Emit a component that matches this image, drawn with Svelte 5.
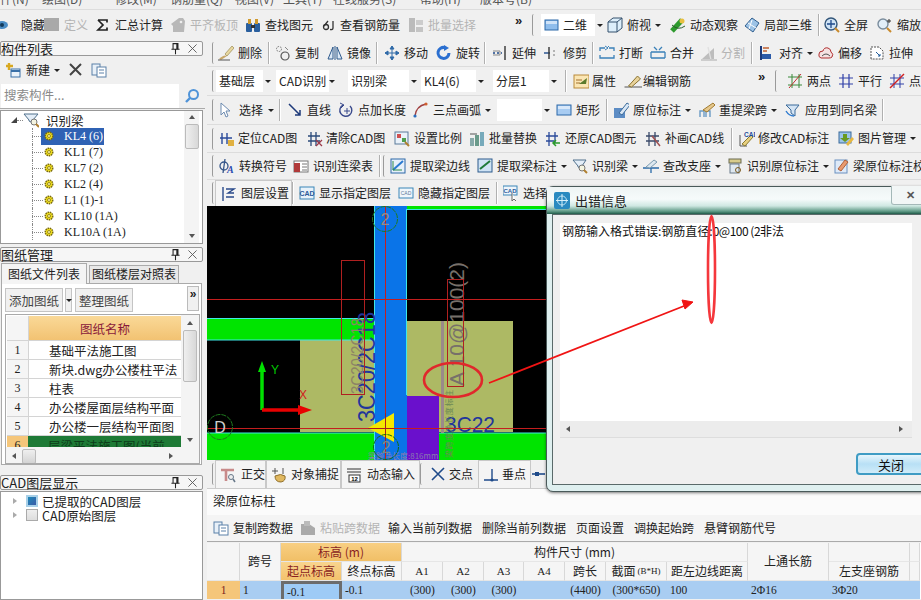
<script>
  const I = {
    eye:'<ellipse cx="2" cy="8" rx="6" ry="4" fill="#4a8cc4"/><circle cx="2" cy="8" r="2" fill="#123a5a"/>',
    sq:'<rect x="0" y="1" width="15" height="13" fill="#a9a9a9"/>',
    sigma:'<path d="M3 3H12V5.5M3 3L8 8L3 13H12V10.5" fill="none" stroke="#222" stroke-width="1.7"/>',
    tag:'<path d="M1 7L9 1H13L15 4L14 15H3V9Z" fill="#b8b8b8"/><circle cx="11" cy="5" r="1.3" fill="#eee"/>',
    binoc:'<rect x="1" y="6" width="6" height="9" rx="1" fill="#2a5f9e"/><rect x="9" y="6" width="6" height="9" rx="1" fill="#2a5f9e"/><rect x="3" y="2" width="3" height="5" fill="#d09a2e"/><rect x="10" y="2" width="3" height="5" fill="#d09a2e"/><rect x="6" y="8" width="4" height="3" fill="#333"/>',
    glass:'<circle cx="4" cy="10" r="2.5" fill="none" stroke="#333" stroke-width="1.3"/><path d="M2 9L6 4M11 4V11Q11 13 8 12.5" fill="none" stroke="#333" stroke-width="1.3"/>',
    batch:'<rect x="1" y="1" width="6" height="14" fill="#bbb"/><rect x="8" y="3" width="7" height="5" fill="#ccc"/><rect x="8" y="10" width="7" height="5" fill="#c4c4c4"/>',
    flat:'<rect x="1" y="3" width="13" height="10" fill="#8fbdec" stroke="#2c68a8"/><rect x="2" y="4" width="11" height="3" fill="#cfe3f8"/>',
    cube:'<path d="M1 5L6 1H15V11L10 15H1Z" fill="#dceefa" stroke="#34506c"/><path d="M1 5H10V15M10 5L15 1" fill="none" stroke="#34506c"/>',
    orbit:'<path d="M2 14L12 3" stroke="#2e9a2e" stroke-width="5"/><circle cx="12" cy="4" r="2.5" fill="#e8c040"/><path d="M2 8Q8 14 15 9" fill="none" stroke="#2c5c2c"/>',
    cube3:'<path d="M8 1L15 6L9 15L1 9Z" fill="#9cc3e6" stroke="#315f8f"/><path d="M4 6L12 11M8 3L5 12" stroke="#fff"/>',
    full:'<circle cx="7" cy="7" r="6" fill="#cfe3f5" stroke="#33567a" stroke-width="1.4"/><path d="M7 3V11M3 7H11" stroke="#1e4a8a" stroke-width="1.3"/><path d="M11 11L15 15" stroke="#c98a2c" stroke-width="2"/>',
    zoom:'<circle cx="6" cy="7" r="5" fill="#e2eef8" stroke="#7a8c9c" stroke-width="1.4"/><path d="M10 11L14 15" stroke="#c98a2c" stroke-width="2"/><path d="M12 2V6M10 4H14" stroke="#333"/>',
    brush:'<path d="M1 14Q6 9 9 11L3 15Z" fill="#c8a86a"/><path d="M7 9L14 1L16 3L9 11Z" fill="#e8d8a0" stroke="#8c7a40" stroke-width=".6"/><path d="M0 15H12" stroke="#555"/>',
    copy:'<circle cx="4" cy="4" r="2.5" fill="none" stroke="#777" stroke-dasharray="1.5 1"/><circle cx="10" cy="11" r="4" fill="none" stroke="#555" stroke-width="1.2"/><path d="M10 2L13 5" stroke="#888"/>',
    mirror:'<path d="M1 14L6 2V14Z" fill="#dbe8f5" stroke="#2f5a8c"/><path d="M15 14L10 2V14Z" fill="#dbe8f5" stroke="#2f5a8c"/><path d="M8 1V15" stroke="#2f5a8c"/>',
    move:'<path d="M8 1V15M1 8H15M8 1L6 4H10ZM8 15L6 12H10ZM1 8L4 6V10ZM15 8L12 6V10Z" fill="#2f6aa8" stroke="#2f6aa8"/>',
    rot:'<path d="M13 8A5.5 5.5 0 1 1 9 2.6" fill="none" stroke="#2b6fd0" stroke-width="3"/><path d="M8 0L13 3L8 6Z" fill="#2b6fd0"/>',
    ext:'<path d="M1 8H3M5 8H7M9 8H10" stroke="#1e4a8a" stroke-width="1.4"/><path d="M1 6H8V10H1" fill="none" stroke="#888"/><path d="M13 1V15" stroke="#333" stroke-width="1.4"/>',
    trim:'<path d="M1 8H7" stroke="#1e4a8a" stroke-width="1.4"/><path d="M6 2V14" stroke="#333" stroke-width="1.4"/><path d="M10 6H12M10 10H12" stroke="#777"/>',
    brk:'<path d="M1 6V3H6M15 6V3H10M1 10V13H15V10" fill="none" stroke="#3a80b8" stroke-width="1.3"/><path d="M6 1L9 3L6 5M10 1L8 3" fill="none" stroke="#3a80b8"/>',
    merge:'<path d="M1 7H15M1 13H15M4 2L7 5M12 2L9 5M1 7V13M15 7V13" fill="none" stroke="#3a80b8" stroke-width="1.3"/>',
    split:'<path d="M1 14L13 3V14Z" fill="#bdbdbd"/><path d="M7 2L10 15" stroke="#e0e0e0" stroke-width="1.3"/><path d="M0 15H16" stroke="#aaa"/>',
    align:'<path d="M2 1V15" stroke="#1c3a7a" stroke-width="2"/><rect x="3" y="9" width="9" height="5" fill="#2a5aa8"/><path d="M4 3H10M4 6H8" stroke="#c06030" stroke-width="1.6"/>',
    cloud:'<path d="M3 13Q0 12 1 9Q1 6 5 6Q6 2 10 3Q13 4 13 7Q16 9 14 12Q13 13 11 13Z" fill="#f5e2e2" stroke="#b03030"/><path d="M4 11Q8 7 12 11" fill="none" stroke="#555"/>',
    stretch:'<path d="M2 14V2H10L14 6V14Z" fill="#fff" stroke="#555" stroke-dasharray="2 1"/><path d="M7 7L11 11M9 11H11V9" stroke="#1e5a9a" fill="none"/>',
    prop:'<rect x="1" y="2" width="15" height="13" fill="#fbe6b4" stroke="#b98a3a"/><path d="M3 7H9M3 10H7" stroke="#a37030"/><path d="M6 11L14 5L13 11Z" fill="#5c7a2c"/>',
    edit:'<path d="M0 14H18" stroke="#555"/><path d="M4 13L13 3L16 6L7 14Z" fill="#e8d29a" stroke="#8a7330"/>',
    two:'<path d="M1 4H15M1 12H15M5 1V15M12 1V15" stroke="#3a8a3a"/><path d="M2 15L14 1" stroke="#c03030"/>',
    par:'<path d="M1 5H15M1 11H15M5 1V15M11 1V15" stroke="#3040a8" stroke-width="1.2"/>',
    point:'<path d="M1 5H15M1 11H15M5 1V15M11 1V15" stroke="#3040a8"/><path d="M1 15L15 1" stroke="#d02020" stroke-width="1.4"/>',
    cursor:'<path d="M3 1V13L6 10L8 15L10 14L8 9H12Z" fill="#fff" stroke="#6d8bb0"/>',
    line:'<path d="M2 2L13 13M13 8V13H8" fill="none" stroke="#1e3a7a" stroke-width="1.5"/>',
    arcplus:'<path d="M5 3A6 6 0 1 0 12 4" fill="none" stroke="#3a4a8c" stroke-width="1.4"/><path d="M2 1L6 3L3 6M9 6V12M6 9H12" fill="none" stroke="#3a4a8c"/>',
    arc:'<path d="M2 14Q3 4 13 2" fill="none" stroke="#a04040" stroke-width="1.5"/><circle cx="2" cy="14" r="1.6" fill="#2a6fc0"/><circle cx="13" cy="2" r="1.6" fill="#d06030"/>',
    rect:'<rect x="1" y="3" width="14" height="10" fill="#a8ccf2" stroke="#2c68a8"/><rect x="2" y="4" width="12" height="3" fill="#d8e8fa"/>',
    mark:'<rect x="1" y="6" width="11" height="10" fill="#5c8cc4"/><path d="M6 11L14 1L17 3L9 13Z" fill="#d8e6f4" stroke="#3a6a9a"/>',
    span:'<path d="M1 15V9H5V15M7 15V9H11V15" fill="none" stroke="#6a9ac4" stroke-width="1.4"/><path d="M4 8L14 1L16 3L8 10Z" fill="#e6c88c" stroke="#a07a30"/>',
    apply:'<path d="M1 3H14L10 8V14L6 11V8Z" fill="#d4e4f4" stroke="#3a6a9a"/><path d="M1 9Q4 14 9 14" stroke="#2c7ad0" fill="none" stroke-width="1.4"/>',
    loc:'<path d="M3 2V13M8 2V13M1 7H13" stroke="#2a4a9a" stroke-width="1.4"/><rect x="9" y="9" width="6" height="6" fill="#e0b040"/>',
    clear:'<path d="M4 1V15M9 1V15M1 5H13M1 10H13" stroke="#2a4a7a" stroke-width="1.3"/><path d="M9 9L15 15M15 9L9 15" stroke="#9c3a4a" stroke-width="1.3"/>',
    scale:'<rect x="1" y="1" width="13" height="12" fill="#eaf2fa" stroke="#5a7a9a"/><rect x="3" y="3" width="4" height="4" fill="#d05050"/><rect x="8" y="7" width="4" height="4" fill="#50a050"/><path d="M11 11L15 15" stroke="#b08030" stroke-width="2"/>',
    repl:'<rect x="1" y="7" width="4" height="8" fill="#8aa"/><rect x="6" y="4" width="4" height="11" fill="#6a9a8a"/><rect x="11" y="1" width="4" height="14" fill="#7ab"/><path d="M1 3H8" stroke="#555"/>',
    restore:'<path d="M4 1V15M10 1V12M1 5H13M1 10H9" stroke="#2a4a9a" stroke-width="1.3"/><path d="M15 12H9M11 9L8 12L11 15" fill="none" stroke="#2a9a2a" stroke-width="1.5"/>',
    draw:'<path d="M4 1V15M10 1V15M1 5H14M1 10H14" stroke="#3a4a6a" stroke-width="1.3"/><path d="M7 5L15 15" stroke="#a05050" stroke-width="1.5"/>',
    modcad:'<path d="M1 4V15H8" fill="none" stroke="#555"/><path d="M3 13L12 4L14 6L6 15Z" fill="#e8d080" stroke="#8a7a30"/><text x="5" y="6" font-size="6.5" font-family="Liberation Sans" font-weight="700" fill="#1e4a9a">CAD</text>',
    pic:'<rect x="1" y="1" width="12" height="11" fill="#9cc4ea" stroke="#3a6a9a"/><path d="M5 3H9V7H12L7 11L2 7H5Z" fill="#6a9a20"/><path d="M8 13L14 6L16 8L10 15Z" fill="#e8b840"/>',
    phi:'<circle cx="5" cy="8" r="4" fill="none" stroke="#35558a" stroke-width="1.3"/><path d="M6 1L4 15" stroke="#35558a" stroke-width="1.3"/><text x="8" y="15" font-size="10" font-style="italic" font-weight="700" font-family="Liberation Serif" fill="#2a4ab0">A</text>',
    tbl:'<rect x="1" y="3" width="14" height="11" fill="#fff" stroke="#777"/><rect x="1" y="5" width="6" height="9" fill="#b03a3a"/><path d="M9 6H14M9 9H14M9 12H14" stroke="#777"/>',
    pick:'<rect x="1" y="1" width="14" height="14" fill="#e6f0fa" stroke="#2c68a8"/><path d="M3 12L13 3" stroke="#2a7ad0" stroke-width="2"/><path d="M3 3V12H12" stroke="#2c8a4a" fill="none"/>',
    pickm:'<rect x="1" y="1" width="14" height="13" fill="#cfe3f5" stroke="#2c5a8c"/><path d="M3 11L13 3" stroke="#1e7a3a" stroke-width="2"/>',
    recog:'<path d="M1 2H14L10 8V11L6 9V8Z" fill="#e4eef8" stroke="#50708c"/><circle cx="10" cy="10" r="3" fill="#f4f4e0" stroke="#777"/><path d="M12 12L15 15" stroke="#b08030" stroke-width="2"/>',
    check:'<path d="M0 10H16M8 10V15" stroke="#2a6aa8" stroke-width="1.3"/><path d="M3 9L11 2L14 4L7 10Z" fill="#dde8f0" stroke="#7a9ab0"/>',
    orig:'<rect x="2" y="1" width="12" height="4" fill="#d8cc8c" stroke="#6a6a50"/><rect x="3" y="6" width="9" height="9" fill="#dfe8f0" stroke="#6a7a8a"/><circle cx="11" cy="12" r="2.5" fill="none" stroke="#7a5a20"/>',
    chk:'<rect x="2" y="2" width="12" height="13" fill="#dfeaf8" stroke="#6a90c0"/><path d="M5 11L12 2L15 4L8 13Z" fill="#e89a70" stroke="#b0603a"/>',
    layer:'<path d="M3 1V15" stroke="#2a4a8a" stroke-width="1.4"/><path d="M6 3H14L8 7H14M6 11H14" fill="none" stroke="#2a4a8a" stroke-width="1.3"/>',
    cad:'<rect x="1" y="2" width="14" height="12" fill="#e8f2fa" stroke="#3a86b8"/><text x="8" y="11" text-anchor="middle" font-size="7" font-family="Liberation Sans" font-weight="700" fill="#2a5a9a">CAD</text>',
    cad2:'<rect x="1" y="3" width="14" height="10" fill="#f0f6fb" stroke="#3a86b8"/><text x="8" y="10" text-anchor="middle" font-size="5" font-family="Liberation Sans" fill="#5a7a9a">CAD</text>',
    cadsel:'<rect x="0" y="1" width="14" height="9" fill="#eef5fb" stroke="#3a86b8"/><text x="7" y="8" text-anchor="middle" font-size="6" font-family="Liberation Sans" font-weight="700" fill="#2a5a9a">CAD</text><path d="M9 8V16L11 14L13 16" fill="#fff" stroke="#666"/>',
    ortho:'<path d="M1 3H14M6 3V14" stroke="#c88a8a" stroke-width="2.6"/><circle cx="11" cy="10" r="2.5" fill="#eee" stroke="#678"/><path d="M13 12L15 15" stroke="#678" stroke-width="1.5"/>',
    snap:'<path d="M4 1V7M1 4H7M12 1V7" stroke="#555"/><path d="M4 9Q10 6 14 9Q15 14 10 15Q4 15 4 9Z" fill="#e0b860" stroke="#90702c"/>',
    dyn:'<path d="M1 2H15M1 5H15" stroke="#333"/><rect x="3" y="8" width="11" height="7" fill="#fff" stroke="#333"/><text x="8.5" y="14" text-anchor="middle" font-size="6" font-family="Liberation Sans" font-weight="700">12</text>',
    cross:'<path d="M2 2L14 14M14 2L2 14" stroke="#1e4a8a" stroke-width="1.6"/>',
    perp:'<path d="M1 13H15M9 2V13" stroke="#1e4a8a" stroke-width="1.4"/><circle cx="9" cy="13" r="1.6" fill="#1e4a8a"/>',
    mid:'<path d="M1 8H14" stroke="#1e4a8a" stroke-width="1.6"/><rect x="4" y="6" width="4" height="4" fill="#1e4a8a"/>',
    pcopy:'<rect x="1" y="2" width="8" height="11" fill="#e8f0f8" stroke="#5a80a8"/><rect x="6" y="5" width="9" height="10" fill="#fff" stroke="#5a80a8"/><path d="M8 8H13M8 11H13" stroke="#5a80a8"/>',
    ppaste:'<path d="M1 4H9L15 8V15H1Z" fill="#aaa"/><rect x="4" y="1" width="6" height="5" fill="#bbb"/>',
    newi:'<path d="M4 1V8M1 4H8" stroke="#d8a820" stroke-width="2.4"/><rect x="6" y="7" width="9" height="8" fill="#eaf2fa" stroke="#3a70a8"/><path d="M6 9H15" stroke="#3a70a8" stroke-width="2"/>',
    del:'<path d="M2 2L13 13M13 2L2 13" stroke="#444" stroke-width="2"/>',
    mag:'<circle cx="9.5" cy="6.5" r="4.5" fill="none" stroke="#4f93d8" stroke-width="2"/><path d="M6 10L2 14" stroke="#4f93d8" stroke-width="2.4"/>',
    pin:'<path d="M5 2H11V9H5ZM3 9H13M8 9V15" fill="none" stroke="#222" stroke-width="1.3"/><path d="M9 2H11V9H9Z" fill="#222"/>',
    x:'<path d="M3 3L13 13M13 3L3 13" stroke="#555" stroke-width="1.1"/>',
    gear:'<circle cx="8" cy="8" r="5" fill="#f3e21b" stroke="#7a6a10" stroke-dasharray="2 1" stroke-width="2"/><circle cx="8" cy="8" r="2" fill="#fff8a0" stroke="#7a6a10"/>',
    rootic:'<path d="M1 2H15L10 8V11L6 9V8Z" fill="#e4eef8" stroke="#50708c"/><circle cx="11" cy="10" r="3" fill="#f4f4e0" stroke="#777"/><path d="M13 12L16 15" stroke="#b08030" stroke-width="2"/>'
  };

  // Toolbars are described by the x where each item starts; widths derive from those.
  const build = (items, start, end) => items.map((it, k) => ({
    ...it,
    w: (k + 1 < items.length ? items[k + 1].x : end) - it.x,
    pad: k === 0 ? it.x - start : 0
  }));

  const top = build([
    {x:0,i:'eye',t:'隐藏',g:5},{x:44,i:'sq',t:'定义',off:1},{x:95,i:'sigma',t:'汇总计算'},{x:170,i:'tag',t:'平齐板顶',off:1},
    {x:245,i:'binoc',t:'查找图元'},{x:322,i:'glass',t:'查看钢筋量',g:2},{x:408,i:'batch',t:'批量选择',off:1},{x:515,m:1},{x:532,grip:1},
    {x:541,combo:1,i:'flat',t:'二维',cw:63},{x:607,i:'cube',t:'俯视',caret:1},{x:670,i:'orbit',t:'动态观察'},{x:744,i:'cube3',t:'局部三维'},{x:818,sep:1},
    {x:824,i:'full',t:'全屏'},{x:877,i:'zoom',t:'缩放'}
  ], 0, 921);

  const rows = [
    {cls:'ra', items:build([
      {x:212,grip:1},{x:218,i:'brush',t:'删除'},{x:268,sep:1},{x:275,i:'copy',t:'复制'},{x:327,i:'mirror',t:'镜像'},{x:376,sep:1},{x:384,i:'move',t:'移动'},
      {x:436,i:'rot',t:'旋转'},{x:484,sep:1},{x:492,i:'ext',t:'延伸'},{x:543,i:'trim',t:'修剪'},{x:592,sep:1},{x:599,i:'brk',t:'打断'},{x:650,i:'merge',t:'合并'},
      {x:701,i:'split',t:'分割',off:1},{x:751,sep:1},{x:759,i:'align',t:'对齐',caret:1},{x:818,i:'cloud',t:'偏移'},{x:869,i:'stretch',t:'拉伸'}
    ],207,921)},
    {cls:'rb', items:build([
      {x:212,grip:1},{x:216,sel:1,t:'基础层',cw:56},{x:276,sel:1,t:'CAD识别',cw:58},{x:348,sel:1,t:'识别梁',cw:70},{x:421,sel:1,t:'KL4(6)',cw:64},{x:493,sel:1,t:'分层1',cw:65},{x:565,sep:1},
      {x:573,i:'prop',t:'属性',g:3},{x:623,i:'edit',t:'编辑钢筋',iw:19,g:1},{x:758,m:1},{x:775,grip:1},{x:787,i:'two',t:'两点'},{x:838,i:'par',t:'平行'},{x:889,i:'point',t:'点'}
    ],207,921)},
    {cls:'rc', items:build([
      {x:212,grip:1},{x:218,i:'cursor',t:'选择',g:5,caret:1},{x:279,sep:1},{x:287,i:'line',t:'直线'},{x:338,i:'arcplus',t:'点加长度'},{x:413,i:'arc',t:'三点画弧',caret:1},
      {x:497,sel:1,t:'',cw:54},{x:556,i:'rect',t:'矩形'},{x:606,sep:1},{x:613,i:'mark',t:'原位标注',caret:1},{x:699,i:'span',t:'重提梁跨',caret:1},{x:785,i:'apply',t:'应用到同名梁'},{x:882,sep:1}
    ],207,921)},
    {cls:'rd', items:build([
      {x:212,grip:1},{x:219,i:'loc',t:'定位CAD图',g:3},{x:307,i:'clear',t:'清除CAD图',g:3},{x:394,i:'scale',t:'设置比例'},{x:469,i:'repl',t:'批量替换'},{x:545,i:'restore',t:'还原CAD图元'},
      {x:645,i:'draw',t:'补画CAD线'},{x:731,sep:1},{x:739,i:'modcad',t:'修改CAD标注',g:3},{x:838,i:'pic',t:'图片管理',caret:1}
    ],207,921)},
    {cls:'re', items:build([
      {x:212,grip:1},{x:219,i:'phi',t:'转换符号',g:4},{x:293,i:'tbl',t:'识别连梁表'},{x:379,sep:1},{x:383,grip:1},{x:390,i:'pick',t:'提取梁边线'},{x:477,i:'pickm',t:'提取梁标注',caret:1},
      {x:572,i:'recog',t:'识别梁',caret:1},{x:643,i:'check',t:'查改支座',caret:1},{x:727,i:'orig',t:'识别原位标注',caret:1},{x:833,i:'chk',t:'梁原位标注校核'}
    ],207,921)},
    {cls:'rf', items:build([
      {x:212,grip:1},{x:215,tab:1,i:'layer',t:'图层设置',g:5},{x:292,sep:1},{x:299,i:'cad',t:'显示指定图层'},{x:398,i:'cad2',t:'隐藏指定图层'},{x:496,sep:1},{x:503,i:'cadsel',t:'选择'}
    ],207,921)}
  ];

  const status = build([
    {x:212,grip:1},{x:215,tab:1,i:'ortho',t:'正交',g:5},{x:266,tab:1,i:'snap',t:'对象捕捉'},{x:341,tab:1,i:'dyn',t:'动态输入',g:5},{x:420,grip:1},{x:430,i:'cross',t:'交点',g:3},{x:478,tab:1,i:'perp',t:'垂点',g:3},{x:531,i:'mid',t:''}
  ],207,921);

  const beam = build([
    {x:213,i:'pcopy',t:'复制跨数据'},{x:300,i:'ppaste',t:'粘贴跨数据',off:1},{x:388,t:'输入当前列数据'},{x:482,t:'删除当前列数据'},{x:576,t:'页面设置'},{x:634,t:'调换起始跨'},{x:704,t:'悬臂钢筋代号'}
  ],207,921);

  const menus = [['件(N)',0],['绘图(D)',42],['修改(M)',115],['钢筋量(Q)',170],['视图(V)',235],['工具(T)',283],['在线服务(S)',333],['帮助(H)',420],['版本号(B)',480]];
  const menuItems = menus.map(([t,x],k)=>({t,w:(menus[k+1]?.[1] ?? 600)-x}));

  const tree = [['KL4 (6)',true],['KL1 (7)'],['KL7 (2)'],['KL2 (4)'],['L1 (1)-1'],['KL10 (1A)'],['KL10A (1A)']];
  const papers = ['基础平法施工图','新块.dwg办公楼柱平法','柱表','办公楼屋面层结构平面','办公楼一层结构平面图'];
  const dataCells = [['-0.1',1],['(300)'],['(300)'],['(300)'],[''],['(4400)'],['(300*650)'],['100',1],['2Φ16',1],['3Φ20',1],['']];
</script>

{#snippet icon(name, w = 16, h = 16)}
  <svg class="ic" width={w} height={h} viewBox="0 0 16 16">{@html I[name]}</svg>
{/snippet}

{#snippet bar(items)}
  {#each items as it}
    <div class="slot" style="width:{it.w}px;margin-left:{it.pad}px">
      {#if it.grip}<span class="grip"></span>
      {:else if it.sep}<span class="sep"></span>
      {:else if it.m}<span class="more">»</span>
      {:else if it.sel}
        <span class="combo" style="width:{it.cw}px"><span class="ctext">{it.t}</span><span class="cbtn"><i class="caret"></i></span></span>
      {:else if it.combo}
        <span class="combo" style="width:{it.cw}px">{@render icon(it.i)}<span class="ctext">{it.t}</span><span class="cbtn"><i class="caret"></i></span></span>
      {:else}
        <span class="tool" class:tab={it.tab} class:off={it.off} style="gap:{it.g ?? 4}px">
          {#if it.i}{@render icon(it.i, it.iw ?? 16)}{/if}
          {#if it.t}<span>{it.t}</span>{/if}
          {#if it.caret}<i class="caret"></i>{/if}
        </span>
      {/if}
    </div>
  {/each}
{/snippet}

<div class="app">
  <div class="menu">
    {#each menuItems as m}<span style="width:{m.w}px">{m.t}</span>{/each}
  </div>
  <div class="topbar">{@render bar(top)}</div>

  <div class="body">
    <aside class="side">
      <section class="panel p1">
        <header class="phead"><span>构件列表</span><span class="pbtns">{@render icon('pin',13,13)}{@render icon('x',13,13)}</span></header>
        <div class="ntool">
          {@render icon('newi')}<span class="ntxt">新建</span><i class="caret"></i>
          {@render icon('del')}{@render icon('pcopy')}
        </div>
        <div class="search"><span class="sinput">搜索构件...</span><span class="sbtn">{@render icon('mag')}</span></div>
        <div class="tree">
          <div class="tlist">
            <div class="troot"><i class="tri"></i><span class="dots"></span>{@render icon('rootic')}<span>识别梁</span></div>
            {#each tree as [t, on]}
              <div class="tnode"><span class="hdots"></span>{@render icon('gear',12,12)}<span class="tname" class:on>{t}</span></div>
            {/each}
          </div>
          <div class="vscroll"><i class="up"></i><b class="thumb t1"></b><i class="down"></i></div>
        </div>
      </section>

      <section class="panel p2">
        <header class="phead"><span>图纸管理</span><span class="pbtns">{@render icon('pin',13,13)}{@render icon('x',13,13)}</span></header>
        <div class="tabs"><span class="ptab act">图纸文件列表</span><span class="ptab">图纸楼层对照表</span></div>
        <div class="pbox">
          <div class="ptools">
            <span class="pbtn b1">添加图纸</span><span class="pbtn b2"><i class="caret"></i></span><span class="pbtn b3">整理图纸</span><span class="pmore">»</span>
          </div>
          <div class="paper">
            <div class="plist">
              <div class="prow phd"><span class="pn"></span><span class="pname">图纸名称</span></div>
              {#each papers as p, k}
                <div class="prow"><span class="pn">{k + 1}</span><span class="pt">{p}</span></div>
              {/each}
              <div class="prow cur"><span class="pn">6</span><span class="pt">层梁平法施工图(当前</span></div>
            </div>
            <div class="vscroll v2"><i class="up"></i><b class="thumb t2"></b><i class="down"></i></div>
            <div class="hscroll"><i class="left"></i><b class="hthumb"></b><i class="right"></i></div>
          </div>
        </div>
      </section>

      <section class="panel p3">
        <header class="phead"><span>CAD图层显示</span><span class="pbtns">{@render icon('pin',13,13)}{@render icon('x',13,13)}</span></header>
        <div class="ltree">
          <div class="lrow"><i class="tri2"></i><span class="cb on"></span><span>已提取的CAD图层</span></div>
          <div class="lrow"><i class="tri2"></i><span class="cb"></span><span>CAD原始图层</span></div>
        </div>
      </section>
    </aside>

    <main class="main">
      {#each rows as r}
        <div class="tbar {r.cls}">{@render bar(r.items)}</div>
      {/each}

      <svg class="canvas" viewBox="207 206 714 254" width="714" height="254">
        <rect x="207" y="206" width="714" height="254" fill="#000"/>
        <rect x="407" y="206" width="514" height="3" fill="#00e400"/>
        <path d="M407 209.5H921" stroke="#3fe8e8"/>
        <rect x="300" y="340" width="74" height="92" fill="#adb964"/>
        <rect x="407" y="321" width="106" height="111" fill="#adb964"/>
        <rect x="207" y="318" width="167" height="22" fill="#00e400"/>
        <path d="M207 318.5H374M207 340H374" stroke="#3fe8e8"/>
        <rect x="207" y="433" width="167" height="27" fill="#00e400"/>
        <rect x="439" y="433" width="482" height="27" fill="#00e400"/>
        <path d="M207 433H374M439 433H921" stroke="#3fe8e8"/>
        <rect x="374" y="206" width="33" height="254" fill="#0a74e8"/>
        <path d="M374.5 206V460M406.5 209V395" stroke="#3fe8e8"/>
        <rect x="407" y="396" width="32" height="64" fill="#6a10cc"/>
        <rect x="441" y="321" width="3" height="112" fill="#9a8a8a"/>
        <text transform="translate(375,422) rotate(-90)" font-family="Liberation Sans" font-size="23" fill="#21359c" textLength="110" lengthAdjust="spacingAndGlyphs">3C20/2C18</text>
        <text transform="translate(363,394) rotate(-90)" font-family="Liberation Sans" font-size="17" fill="#8d8466" textLength="76" lengthAdjust="spacingAndGlyphs">3C20/2C18</text>
        <text transform="translate(464,386) rotate(-90)" font-family="Liberation Sans" font-size="21" fill="#77706a" textLength="124" lengthAdjust="spacingAndGlyphs">A 10@100(2)</text>
        <text x="445" y="432" font-family="Liberation Sans" font-size="22" fill="#21359c" textLength="50" lengthAdjust="spacingAndGlyphs">3C22</text>
        <text transform="translate(452,458) rotate(-90)" font-family="Noto Sans CJK SC" font-size="8" fill="#6c8a55" textLength="68">梁跨度净长度标注</text>
        <text x="368" y="459" font-family="Noto Sans CJK SC" font-size="8" fill="#8a7ab0">梁跨净长度:816mm</text>
        <rect x="341.5" y="260.5" width="23" height="134" fill="none" stroke="#b02020"/>
        <rect x="447.5" y="279.5" width="16" height="107" fill="none" stroke="#b02020"/>
        <path d="M207 299.5H921M207 428.5H921M385.5 206V460" stroke="#c41e1e"/>
        <path d="M368 428L394 413V442Z" fill="#f4e800"/>
        <path d="M385.5 413V442M368 428.5H394" stroke="#a51e1e"/>
        <circle cx="385" cy="219" r="12.5" fill="none" stroke="#1f7a1f" stroke-dasharray="5 1"/>
        <text x="385" y="225" text-anchor="middle" font-family="Liberation Sans" font-size="16" fill="#9a8a80">2</text>
        <circle cx="386" cy="447" r="12.5" fill="none" stroke="#146a14" stroke-dasharray="5 1"/>
        <text x="386" y="453" text-anchor="middle" font-family="Liberation Sans" font-size="16" fill="#7a8a80">2</text>
        <circle cx="220" cy="427" r="12.5" fill="none" stroke="#1f7a1f" stroke-dasharray="5 1"/>
        <text x="220" y="433" text-anchor="middle" font-family="Liberation Sans" font-size="16" fill="#cfcfcf">D</text>
        <path d="M262 410V367" stroke="#00e000" stroke-width="3.5"/><path d="M258 372L262 361L266 372Z" fill="#00e000"/>
        <path d="M262 410H300" stroke="#e80000" stroke-width="3.5"/><path d="M298 405L312 410L298 415Z" fill="#e80000"/>
        <text x="271" y="374" font-family="Liberation Sans" font-size="12" fill="#00c800">Y</text>
        <text x="299" y="399" font-family="Liberation Sans" font-size="12" fill="#d02020">X</text>
      </svg>

      <div class="status">{@render bar(status)}</div>
      <div class="btitle">梁原位标柱</div>
      <div class="btool">{@render bar(beam)}</div>

      <div class="grid">
        <span class="g gno"></span>
        <span class="g gspan">跨号</span>
        <span class="g gele">标高 (m)</span>
        <span class="g gsize">构件尺寸 (mm)</span>
        <span class="g gtop">上通长筋</span>
        <span class="g gblank"></span>
        <span class="g gblank2"></span>
        <span class="g gstart">起点标高</span>
        <span class="g">终点标高</span>
        <span class="g sm">A1</span><span class="g sm">A2</span><span class="g sm">A3</span><span class="g sm">A4</span>
        <span class="g">跨长</span>
        <span class="g">截面 <small>(B*H)</small></span>
        <span class="g">距左边线距离</span>
        <span class="g gleft">左支座钢筋</span>
        <span class="g"></span>
        <span class="d dno">1</span>
        <span class="d dl">1</span>
        <span class="d dl dsel">-0.1</span>
        {#each dataCells as [c, left]}
          <span class="d" class:dl={left}>{c}</span>
        {/each}
      </div>
    </main>
  </div>

  <div class="dialog">
    <div class="dhead">
      <svg class="dicon" width="16" height="17" viewBox="0 0 16 17"><rect width="16" height="17" rx="2" fill="#2a8ac0"/><circle cx="8" cy="8.5" r="4.5" fill="none" stroke="#bfe4f5"/><path d="M8 2V15M2 8.5H14" stroke="#d8f0fa"/></svg>
      <span class="dtitle">出错信息</span>
      <span class="dclose">✕</span>
    </div>
    <div class="dbody">
      <div class="dbox">
        <div class="dtext">钢筋输入格式错误:钢筋直径:<span class="dlat">0@100 (2</span>非法</div>
        <div class="dh"><i class="left"></i><i class="right"></i></div>
      </div>
      <div class="dfoot"><button class="dbtn">关闭</button></div>
    </div>
  </div>

  <svg class="notes" viewBox="0 0 921 600" width="921" height="600">
    <ellipse cx="453" cy="380" rx="29" ry="17" fill="none" stroke="#e0282c" stroke-width="2.6"/>
    <ellipse cx="711.5" cy="269.5" rx="3.5" ry="53.5" fill="none" stroke="#f5373c" stroke-width="2.6"/>
    <path d="M489 383L684 306" stroke="#f01414" stroke-width="1.8"/>
    <path d="M693 302L682 300L685 309Z" fill="#f01414" stroke="#f01414"/>
  </svg>
</div>

<style>
  :global(body){margin:0;background:#f0f0f0}
  .app{position:relative;width:921px;height:600px;overflow:hidden;background:#f0f0f0;color:#222;font:12px/1.2 "Noto Sans CJK SC","Liberation Sans",sans-serif;display:flex;flex-direction:column}
  .menu{height:9px;overflow:hidden;display:flex;flex:none;line-height:12px;color:#555;border-bottom:1px solid #ddd;box-sizing:content-box}
  .menu span{flex:none;margin-top:-7px;white-space:nowrap}
  .topbar{height:30px;flex:none;display:flex;align-items:center;overflow:hidden}
  .body{flex:1;display:flex;min-height:0}
  .side{width:205px;flex:none;margin-right:2px;position:relative;display:flex;flex-direction:column}
  .main{flex:1;min-width:0;display:flex;flex-direction:column}
  .tbar{display:flex;align-items:center;flex:none;overflow:hidden;border-bottom:1px solid #dcdcdc;box-sizing:border-box}
  .ra{height:27px}.rb{height:29px}.rc{height:29px}.rd{height:28px}.re{height:27px}.rf{height:26px;border:0}
  .slot{flex:none;display:flex;align-items:center;height:100%;white-space:nowrap;overflow:visible}
  .ic{flex:none;display:block}
  .tool{display:inline-flex;align-items:center;height:100%}
  .tool.off{color:#b4b4b4}
  .tool.tab{box-sizing:border-box;width:100%;padding:0 4px;border:1px solid #c8c8c8;border-bottom:0;background:#f4f4f4}
  .caret{display:inline-block;width:0;height:0;border:3px solid transparent;border-top:3px solid #222;border-bottom:0;flex:none}
  .grip{display:block;width:3px;height:22px;border-left:1px solid #9a9a9a;border-radius:2px 0 0 2px}
  .sep{display:block;width:1px;height:22px;background:#b0b0b0;box-shadow:1px 0 #fff}
  .more{font:700 13px/1 "Liberation Sans",sans-serif;margin:-10px 0 0 0}
  .combo{display:flex;align-items:center;height:22px;background:#fff;padding-left:3px;box-sizing:border-box;gap:3px}
  .ctext{flex:1;white-space:nowrap}
  .cbtn{width:9px;height:100%;background:#f0f0f0;display:flex;align-items:center;justify-content:center}
  .canvas{flex:none;display:block}
  .status{height:29px;flex:none;display:flex;align-items:center;overflow:hidden;border-bottom:1px solid #ccc;box-sizing:border-box}
  .btitle{height:26px;flex:none;background:#fbfbfb;padding:4px 0 0 6px;box-sizing:border-box;font-size:12.5px}
  .btool{height:27px;flex:none;display:flex;align-items:center;border-bottom:1px solid #aaa;box-sizing:border-box;margin-bottom:1px;background:#f4f4f4}
  .grid{flex:none;display:grid;grid-template-columns:33px 41px 61px 60px 41px 41px 40px 41px 41px 61px 81px 81px 81px 10px;grid-template-rows:19px 19px 18px;background:#fff;text-align:center}
  .g{display:flex;align-items:center;justify-content:center;background:#f5f5f5;border-right:1px solid #d8d8d8;border-bottom:1px solid #e6e6e6;box-sizing:border-box;white-space:nowrap}
  .g small{font:9px "Liberation Serif",serif;margin-left:2px}
  .sm{font:11px "Liberation Serif",serif}
  .gno{grid-row:1/3}
  .gspan{grid-row:1/3}
  .gele{grid-column:3/5;background:linear-gradient(#f8cf83,#f1bf66);color:#8a1f1f}
  .gsize{grid-column:5/12}
  .gtop{grid-row:1/3;grid-column:12}
  .gblank{grid-column:13}
  .gblank2{grid-column:14}
  .gstart{background:linear-gradient(#f8d48e,#f3c26c);color:#8a1f1f}
  .gleft{grid-column:13}
  .d{background:#a9cdf2;display:flex;align-items:center;justify-content:center;white-space:nowrap;box-sizing:border-box;font:11.5px "Liberation Serif","Noto Sans CJK SC",serif;overflow:hidden}
  .dl{justify-content:flex-start;padding-left:3px}
  .dno{background:#f5c67a;color:#7a2020}
  .dsel{background:#9ecbf6;border:3px solid #6c6c6c;border-bottom:0}

  .panel{display:flex;flex-direction:column;flex:none;box-sizing:border-box}
  .p1{margin-top:1px;height:203px}
  .p2{margin-top:3px;height:217px}
  .p3{margin-top:11px;height:125px}
  .phead{height:15px;flex:none;display:flex;justify-content:space-between;align-items:center;border:1px solid #999;border-radius:2px;margin-right:2px;background:#f6f6f6;font-size:13px;line-height:13px;box-sizing:border-box}
  .pbtns{display:flex;gap:4px;padding-right:3px}
  .ntool{height:28px;flex:none;display:flex;align-items:center;padding-left:5px}
  .ntxt{margin-left:5px}
  .ntool .caret{margin:0 8px 0 4px}
  .ntool svg:nth-of-type(3){margin-left:7px}
  .search{height:25px;display:flex;flex:none;border-bottom:1px solid #aaa;box-sizing:border-box}
  .sinput{width:178px;background:#fff;color:#8a8a8a;margin-left:1px;padding:3px 0 0 3px;box-sizing:border-box;font-size:12.5px}
  .sbtn{flex:1;display:flex;align-items:center;justify-content:center}
  .tree{height:134px;margin:1px 2px 0 0;border:1px solid #999;background:#fff;display:flex;box-sizing:border-box;flex:none;overflow:hidden}
  .tlist{flex:1;padding-top:1px;position:relative}
  .troot{height:16px;display:flex;align-items:center;padding-left:10px;font-size:12.5px}
  .troot span:last-child{margin-left:7px}
  .tri{width:0;height:0;border-right:6px solid #444;border-top:6px solid transparent;flex:none}
  .dots{width:6px;border-top:1px dotted #888}
  .tnode{height:16px;display:flex;align-items:center;padding-left:31px;font:12px "Liberation Serif","Noto Sans CJK SC",serif;position:relative}
  .tnode::before{content:"";position:absolute;left:31px;top:0;height:16px;border-left:1px dotted #888}
  .hdots{width:11px;border-top:1px dotted #888;flex:none}
  .tname{margin-left:4px;padding:1px 5px;white-space:nowrap}
  .tname.on{background:#2f62b4;color:#fff;box-sizing:border-box;margin-left:-14px;padding-left:23px;width:63px;position:relative;z-index:0}
  .tnode svg{position:relative;z-index:1}
  .vscroll{width:15px;flex:none;background:#f4f4f4;margin-right:3px;display:flex;flex-direction:column;align-items:center;padding-top:4px;box-sizing:border-box;position:relative}
  .thumb{display:block;width:14px;background:linear-gradient(90deg,#efefef,#d8d8d8);border:1px solid #bbb;box-sizing:border-box;border-radius:2px}
  .t1{height:25px;margin-top:5px}
  .t2{height:52px;margin-top:5px}
  .up,.down,.left,.right{display:block;width:0;height:0;border:3px solid transparent;flex:none}
  .up{border-bottom:4px solid #555;border-top:0}
  .down{border-top:4px solid #555;border-bottom:0;position:absolute;bottom:5px}
  .left{border-right:4px solid #555;border-left:0}
  .right{border-left:4px solid #555;border-right:0}
  .tabs{height:20px;flex:none;display:flex;margin-top:1px;padding-left:1px;gap:2px;font-size:12px;white-space:nowrap}
  .ptab{display:flex;align-items:center;justify-content:center;width:90px;border:1px solid #aaa;border-bottom:0;box-sizing:border-box;background:#e8e8e8;margin-top:2px}
  .ptab.act{width:86px;background:#f4f4f4;margin-top:0;height:21px;position:relative;z-index:1}
  .pbox{flex:1;margin:0 3px 0 1px;border:1px solid #aaa;background:#fff;padding:4px 0 0 3px;box-sizing:border-box;height:182px;display:flex;flex-direction:column}
  .ptools{height:24px;display:flex;flex:none;gap:2px;padding-right:2px}
  .pbtn{display:flex;align-items:center;justify-content:center;background:#f0f0f0;border:1px solid #c4c4c4;box-sizing:border-box;color:#444;font-size:12.5px}
  .b1{width:58px}.b2{width:7px;margin-right:1px}.b3{width:58px}
  .pmore{margin-left:auto;width:12px;background:#f0f0f0;border:1px solid #bbb;text-align:center;font:700 12px/14px "Liberation Sans",sans-serif;box-sizing:border-box;margin-top:-2px;height:25px}
  .paper{flex:1;margin:2px 1px 0 0;border:1px solid #aaa;background:#fff;position:relative;display:grid;grid-template-columns:175px 18px;grid-template-rows:132px 18px;overflow:hidden}
  .plist{overflow:hidden;padding:1px 0 0 1px}
  .prow{display:flex;height:19px;border-bottom:1px solid #d4d4d4;box-sizing:border-box}
  .phd{height:25px}
  .pn{width:21px;flex:none;background:#f5f5f5;display:flex;align-items:center;justify-content:center;border-right:1px solid #d4d4d4;font-family:"Liberation Serif",serif}
  .pname{flex:1;background:linear-gradient(#fad998,#f2c272);color:#8a1a3a;display:flex;align-items:center;justify-content:center;font-size:12.5px}
  .pt{padding:1px 0 0 20px;white-space:nowrap;overflow:hidden;font-size:12.5px;line-height:17px}
  .cur .pn{background:#f5c67a}
  .cur .pt{flex:1;background:#1e7a36;color:#0d3d1a;margin-left:-1px}
  .v2{margin:0;width:18px;padding:6px 2px 0}
  .hscroll{grid-column:1/3;background:#f4f4f4;display:flex;align-items:center;padding:0 6px;gap:6px;position:relative}
  .hthumb{display:block;width:14px;height:15px;background:linear-gradient(#efefef,#d4d4d4);border:1px solid #bbb;box-sizing:border-box;border-radius:2px}
  .hscroll .right{margin-left:auto;margin-right:20px}
  .ltree{flex:1;margin:1px 2px 0 0;background:#fff;border:1px solid #999;padding:2px 0 0 12px;box-sizing:border-box;font-size:12.5px}
  .lrow{display:flex;align-items:center;height:14px}
  .tri2{width:0;height:0;border:3px solid transparent;border-left:4px solid #aaa;border-right:0;margin-right:9px}
  .cb{width:12px;height:12px;border:1px solid #aaa;background:linear-gradient(#eee,#ddd);box-sizing:border-box;margin-right:4px;flex:none}
  .cb.on{background:linear-gradient(135deg,#1e8ab8,#3a5aa8);border:2px solid #a8d0e8}

  .dialog{position:absolute;left:546px;top:186px;width:385px;height:306px;border:1px solid #4a5a5a;border-radius:7px 0 0 7px;box-shadow:0 1px 3px rgba(0,0,0,.5);background:#dff0f0;box-sizing:border-box;padding:0 0 6px 5px;display:flex;flex-direction:column}
  .dhead{height:27px;flex:none;margin-left:-5px;padding-left:7px;display:flex;align-items:center;gap:5px;background:linear-gradient(#eef4f4,#f6fbfb 45%,#cfe8e2 70%,#5f9a86 90%,#1f5a48);position:relative}
  .dtitle{font-size:13px}
  .dclose{position:absolute;left:344px;top:-1px;width:40px;height:19px;border:1px solid #a4b8b8;border-top:0;border-radius:0 0 3px 3px;font:700 11px/19px "Liberation Sans",sans-serif;padding-left:14px;box-sizing:border-box;background:#f2f6f6;color:#555}
  .dbody{flex:1;background:#f0f0f0;border:1px solid #5a6a6a;border-right:0;padding:8px 0 0 7px;display:flex;flex-direction:column;box-sizing:border-box}
  .dbox{height:215px;width:352px;background:#fff;flex:none;display:flex;flex-direction:column;border-bottom:1px solid #ddd;box-sizing:border-box}
  .dtext{flex:1;padding:0 0 0 2px;font-size:12px;line-height:16px;color:#111;white-space:nowrap}
  .dlat{letter-spacing:-.5px}
  .dh{height:16px;background:#ececec;display:flex;justify-content:space-between;align-items:center;padding:0 9px 0 6px}
  .dfoot{padding:15px 0 0 296px}
  .dbtn{width:70px;height:22px;padding:0;font:13px "Noto Sans CJK SC",sans-serif;border:2px solid #3f9cc4;border-radius:4px;background:linear-gradient(#e6f5fc,#b8e0f5 50%,#d0ecf9);color:#111;box-sizing:border-box}
  .notes{position:absolute;left:0;top:0;pointer-events:none}
</style>
